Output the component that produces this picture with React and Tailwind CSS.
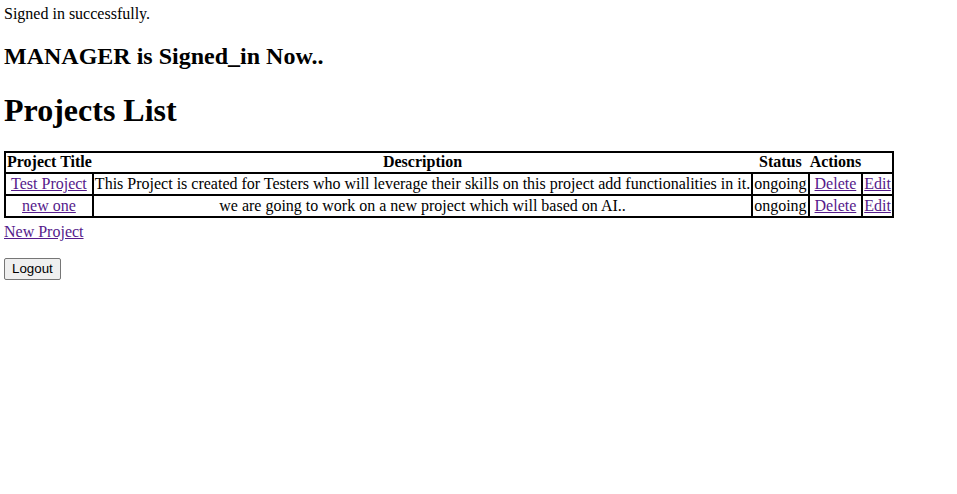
import React from "react";

const projects = [
    {
        id: 1,
        title: "Test Project",
        description: "This Project is created for Testers who will leverage their skills on this project add functionalities in it.",
        status: "ongoing",
    },
    {
        id: 2,
        title: "new one",
        description: "we are going to work on a new project which will based on AI..",
        status: "ongoing",
    },
];

const linkCls = "text-[#551a8b] underline";

const App = () => {
    return (
        <div className="min-h-screen bg-white px-[4px] pt-[5px] font-['Liberation_Serif',serif] text-[16px] leading-[normal] text-black">
            <p>Signed in successfully.</p>

            <h2 className="mt-[20px] mb-[22px] text-[24px] font-bold">MANAGER is Signed_in Now..</h2>

            <h1 className="mb-[22px] text-[32px] font-bold">Projects List</h1>

            <table className="border-collapse border-2 border-black">
                <thead>
                    <tr>
                        <th className="px-[1px] pt-0 pb-[1px] font-bold">Project Title</th>
                        <th className="px-[1px] pt-0 pb-[1px] font-bold">Description</th>
                        <th className="px-[1px] pt-0 pb-[1px] font-bold">Status</th>
                        <th className="px-[1px] pt-0 pb-[1px] font-bold">Actions</th>
                    </tr>
                </thead>
                <tbody>
                    {projects.map((project) => (
                        <tr key={project.id}>
                            <td className="border-2 border-black p-[1px] text-center">
                                <a href="#" className={linkCls}>{project.title}</a>
                            </td>
                            <td className="border-2 border-black p-[1px] text-center">{project.description}</td>
                            <td className="border-2 border-black p-[1px] text-center">{project.status}</td>
                            <td className="border-2 border-black p-[1px] text-center">
                                <a href="#" className={linkCls}>Delete</a>
                            </td>
                            <td className="border-2 border-black p-[1px] text-center">
                                <a href="#" className={linkCls}>Edit</a>
                            </td>
                        </tr>
                    ))}
                </tbody>
            </table>

            <a href="#" className={"mt-[5px] inline-block " + linkCls}>New Project</a>

            <div className="mt-[17px]">
                <button className="rounded-[2px] border border-[#767676] bg-[#efefef] px-[7px] pt-[2px] pb-[3px] font-['Liberation_Sans',Arial,sans-serif] text-[13.333px] leading-[normal] text-black">
                    Logout
                </button>
            </div>
        </div>
    );
};

export default App;
